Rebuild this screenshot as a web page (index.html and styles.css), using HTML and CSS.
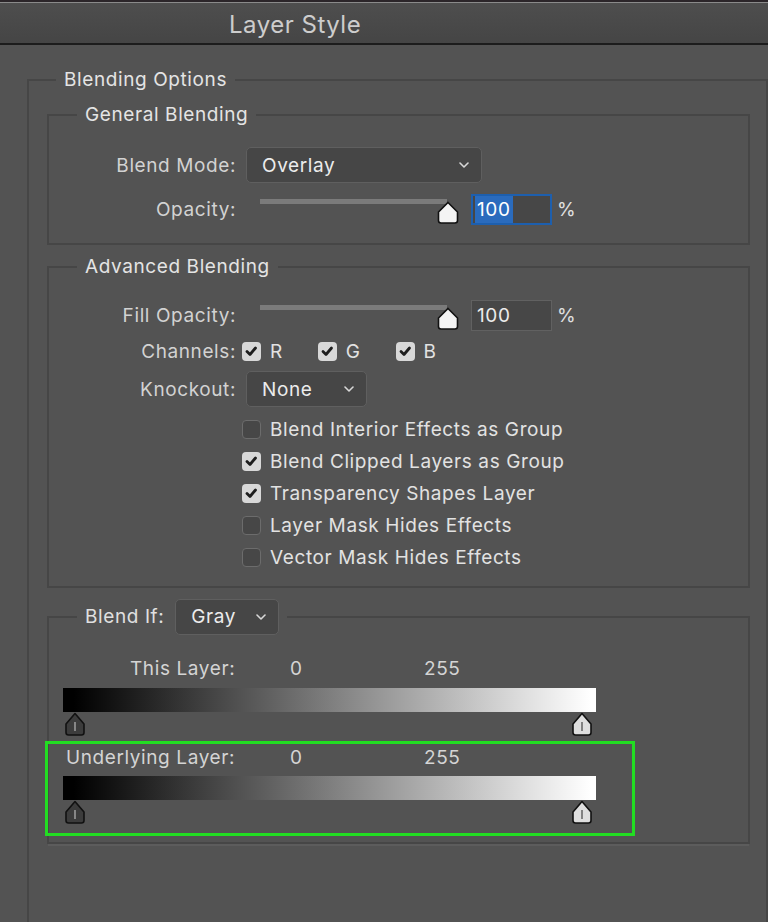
FILE: index.html
```html
<!DOCTYPE html>
<html lang="en">
<head>
  <meta charset="UTF-8">
  <title>Layer Style</title>
  <link rel="stylesheet" href="styles.css">
</head>
<body>
  <header class="title-bar">
    <span class="title">Layer Style</span>
  </header>
  <div class="panel">
    <fieldset class="group outer">
      <legend>Blending Options</legend>

      <fieldset class="group general">
        <legend>General Blending</legend>
        <div class="rows">
          <div class="row">
            <span class="label">Blend Mode:</span>
            <div class="select mode">
              <span>Overlay</span>
              <svg class="chev" width="10" height="6" viewBox="0 0 10 6"><path d="M1 1 L5 5 L9 1"/></svg>
            </div>
          </div>
          <div class="row">
            <span class="label">Opacity:</span>
            <div class="slider">
              <div class="track"></div>
              <svg class="thumb" width="22" height="23" viewBox="0 0 22 23"><path d="M11 1.5 L20.5 11 V19.5 Q20.5 22 18 22 H4 Q1.5 22 1.5 19.5 V11 Z"/></svg>
            </div>
            <div class="num focus"><span class="sel">100</span></div>
            <span class="pct">%</span>
          </div>
        </div>
      </fieldset>

      <fieldset class="group advanced">
        <legend>Advanced Blending</legend>
        <div class="rows">
          <div class="row tall">
            <span class="label">Fill Opacity:</span>
            <div class="slider">
              <div class="track"></div>
              <svg class="thumb" width="22" height="23" viewBox="0 0 22 23"><path d="M11 1.5 L20.5 11 V19.5 Q20.5 22 18 22 H4 Q1.5 22 1.5 19.5 V11 Z"/></svg>
            </div>
            <div class="num"><span>100</span></div>
            <span class="pct">%</span>
          </div>
          <div class="row tall">
            <span class="label">Channels:</span>
            <div class="channels">
              <span class="check"><span class="box on"><svg width="19" height="19" viewBox="0 0 19 19"><path d="M5 9.5 L8 12.5 L13.5 6"/></svg></span>R</span>
              <span class="check"><span class="box on"><svg width="19" height="19" viewBox="0 0 19 19"><path d="M5 9.5 L8 12.5 L13.5 6"/></svg></span>G</span>
              <span class="check"><span class="box on"><svg width="19" height="19" viewBox="0 0 19 19"><path d="M5 9.5 L8 12.5 L13.5 6"/></svg></span>B</span>
            </div>
          </div>
          <div class="row knock">
            <span class="label">Knockout:</span>
            <div class="select knockout">
              <span>None</span>
              <svg class="chev" width="10" height="6" viewBox="0 0 10 6"><path d="M1 1 L5 5 L9 1"/></svg>
            </div>
          </div>
          <div class="options">
            <span class="check"><span class="box"></span>Blend Interior Effects as Group</span>
            <span class="check"><span class="box on"><svg width="19" height="19" viewBox="0 0 19 19"><path d="M5 9.5 L8 12.5 L13.5 6"/></svg></span>Blend Clipped Layers as Group</span>
            <span class="check"><span class="box on"><svg width="19" height="19" viewBox="0 0 19 19"><path d="M5 9.5 L8 12.5 L13.5 6"/></svg></span>Transparency Shapes Layer</span>
            <span class="check"><span class="box"></span>Layer Mask Hides Effects</span>
            <span class="check"><span class="box"></span>Vector Mask Hides Effects</span>
          </div>
        </div>
      </fieldset>

      <fieldset class="group blendif">
        <legend class="if-legend">
          <span>Blend If:</span>
          <div class="select gray">
            <span>Gray</span>
            <svg class="chev" width="10" height="6" viewBox="0 0 10 6"><path d="M1 1 L5 5 L9 1"/></svg>
          </div>
        </legend>

        <div class="range">
          <div class="range-head">
            <span class="range-label this">This Layer:</span>
            <span>0</span>
            <span>255</span>
          </div>
          <div class="gradient"></div>
          <div class="stops">
            <svg class="stop dark" width="22" height="24" viewBox="0 0 22 24"><path d="M11 1.5 L20 12 V20.5 Q20 23 17.5 23 H4.5 Q2 23 2 20.5 V12 Z"/><line x1="11" y1="10" x2="11" y2="19"/></svg>
            <svg class="stop light" width="22" height="24" viewBox="0 0 22 24"><path d="M11 1.5 L20 12 V20.5 Q20 23 17.5 23 H4.5 Q2 23 2 20.5 V12 Z"/><line x1="11" y1="10" x2="11" y2="19"/></svg>
          </div>
        </div>

        <div class="range highlight">
          <div class="range-head">
            <span class="range-label">Underlying Layer:</span>
            <span>0</span>
            <span>255</span>
          </div>
          <div class="gradient"></div>
          <div class="stops">
            <svg class="stop dark" width="22" height="24" viewBox="0 0 22 24"><path d="M11 1.5 L20 12 V20.5 Q20 23 17.5 23 H4.5 Q2 23 2 20.5 V12 Z"/><line x1="11" y1="10" x2="11" y2="19"/></svg>
            <svg class="stop light" width="22" height="24" viewBox="0 0 22 24"><path d="M11 1.5 L20 12 V20.5 Q20 23 17.5 23 H4.5 Q2 23 2 20.5 V12 Z"/><line x1="11" y1="10" x2="11" y2="19"/></svg>
          </div>
        </div>
      </fieldset>
    </fieldset>
  </div>
</body>
</html>
```

FILE: styles.css
```css
body, html {
  margin: 0;
  padding: 0;
  background-color: #535353;
  font-family: Inter, "Liberation Sans", sans-serif;
  font-size: 19px;
  letter-spacing: 0.6px;
  color: #dcdcdc;
  overflow: hidden;
}
.title-bar {
  height: 38px;
  padding: 3px 0 0 229px;
  border-top: 2px solid #2b2529;
  border-bottom: 2px solid #1c1c1c;
  box-shadow: inset 0 1px 0 #8a8a8a;
  background: linear-gradient(#4e4e4e, #454545);
  display: flex;
  align-items: center;
}
.title {
  font-size: 24px;
  letter-spacing: 0.5px;
  color: #cdcdcd;
}
.panel {
  padding-left: 27px;
}
.group {
  margin: 0;
  padding: 0;
  min-width: 0;
  border: 2px solid #464646;
}
.group > legend {
  padding: 0 8px;
  margin-left: 28px;
  line-height: 22px;
  color: #e4e4e4;
}
.outer {
  margin-top: 24px;
  padding: 13px 16px 0 18px;
  border-bottom: none;
  min-height: 842px;
}
.outer > legend {
  margin-left: 9px;
}
.general,
.advanced {
  margin-bottom: 11px;
}
.general .rows {
  padding: 17px 0 12px;
}
.advanced .rows {
  padding: 19px 0 13px;
}
.row {
  display: flex;
  align-items: center;
  height: 44px;
}
.row.tall {
  height: 36px;
}
.row.knock {
  height: 40px;
}
.label {
  width: 187px;
  margin-right: 10px;
  text-align: right;
  color: #d2d2d2;
}
.select {
  display: flex;
  justify-content: space-between;
  align-items: center;
  box-sizing: border-box;
  height: 36px;
  padding: 0 12px 0 15px;
  border: 1px solid #5f5f5f;
  border-radius: 5px;
  background: #464646;
  color: #ececec;
}
.select.mode {
  width: 236px;
}
.select.knockout {
  width: 121px;
}
.select.gray {
  width: 104px;
}
.chev path {
  fill: none;
  stroke: #d8d8d8;
  stroke-width: 1.6;
  stroke-linecap: round;
  stroke-linejoin: round;
}
.slider {
  position: relative;
  width: 213px;
  height: 31px;
  align-self: center;
}
.track {
  height: 5px;
  margin: 5px 12px 0 14px;
  background: #7b7b7b;
}
.thumb {
  position: absolute;
  right: 0;
  top: 7px;
}
.thumb path {
  fill: #f4f4f4;
  stroke: #111;
  stroke-width: 1.6;
}
.num {
  display: flex;
  align-items: center;
  box-sizing: border-box;
  width: 81px;
  height: 31px;
  margin-left: 12px;
  padding-left: 5px;
  border: 1px solid #616161;
  background: #474747;
  color: #ececec;
}
.num.focus {
  padding-left: 2px;
  border: 2px solid #1d5fae;
  align-items: stretch;
}
.sel {
  display: flex;
  align-items: center;
  padding: 0 2px;
  background: #2a6bbd;
  color: #fff;
}
.pct {
  margin-left: 5px;
  color: #e0e0e0;
}
.channels {
  display: flex;
  gap: 35px;
  margin-left: -4px;
}
.check {
  display: flex;
  align-items: center;
  gap: 9px;
  color: #e2e2e2;
}
.box {
  display: block;
  box-sizing: border-box;
  width: 19px;
  height: 19px;
  border-radius: 4px;
  border: 1.5px solid #6c6c6c;
  background: #474747;
}
.box.on {
  border: none;
  background: #d8d8d8;
}
.box svg {
  display: block;
}
.box path {
  fill: none;
  stroke: #1e1e1e;
  stroke-width: 2.8;
  stroke-linecap: round;
  stroke-linejoin: round;
}
.options {
  display: flex;
  flex-direction: column;
  margin: 4px 0 0 193px;
}
.options .check {
  height: 32px;
}
.blendif {
  padding: 21px 0 6px;
  box-shadow: 0 3px 0 -1px #5c5c5c;
}
.if-legend {
  display: flex;
  align-items: center;
  gap: 11px;
}
.if-legend > span {
  color: #e0e0e0;
}
.range {
  width: 533px;
  padding-left: 14px;
}
.range-head {
  display: grid;
  grid-template-columns: 227px 134px auto;
  align-items: center;
  height: 24px;
  color: #d4d4d4;
}
.range-label.this {
  margin-left: 67px;
}
.range-label {
  margin-left: 3px;
}
.gradient {
  height: 24px;
  margin-top: 8px;
  background: linear-gradient(to right, #000 2%, #fff 99%);
}
.stops {
  display: flex;
  justify-content: space-between;
  height: 24px;
  padding: 0 3px 0 1px;
}
.stop path {
  stroke: #111;
  stroke-width: 1.6;
  stroke-linejoin: round;
}
.stop line {
  stroke-width: 1.6;
}
.stop.dark path {
  fill: #3c3c3c;
}
.stop.dark line {
  stroke: #9a9a9a;
}
.stop.light path {
  fill: #dedede;
}
.stop.light line {
  stroke: #6a6a6a;
}
.highlight {
  margin: 5px 0 0 -4px;
  padding: 1px 36px 9px 15px;
  border: 3px solid #22dd22;
}
.highlight .gradient {
  margin-top: 7px;
}
```
